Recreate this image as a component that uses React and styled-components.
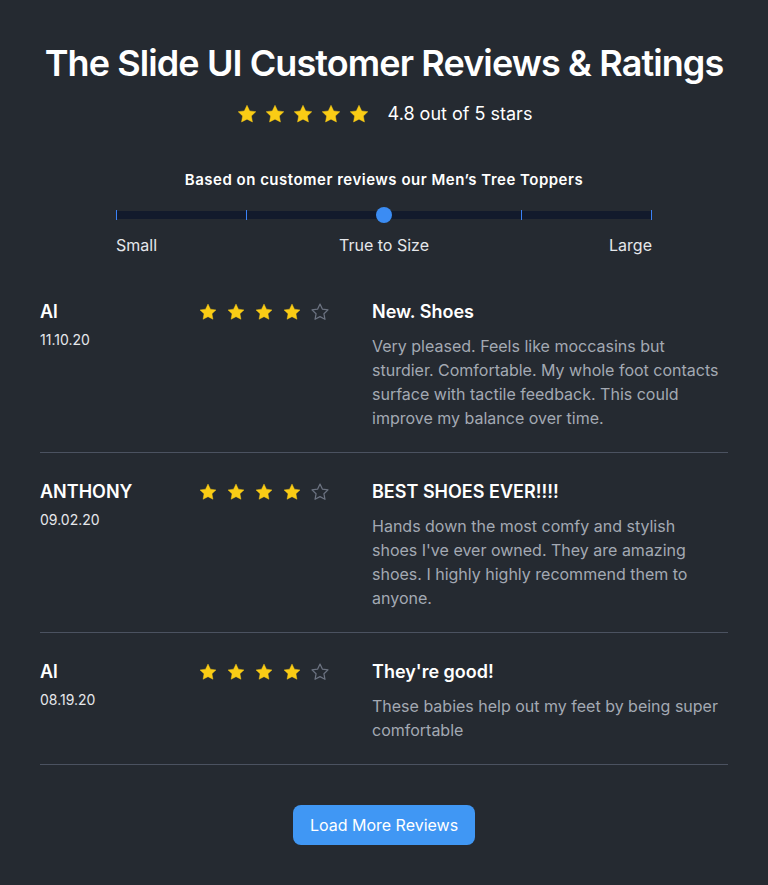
import React from "react";
import styled, { createGlobalStyle } from "styled-components";

const GlobalStyle = createGlobalStyle`
  * { box-sizing: border-box; }
  body {
    margin: 0;
    background: #252a31;
    font-family: Inter, "Noto Sans", sans-serif;
    color: #ffffff;
  }
`;

const Page = styled.div`
  padding: 43px 40px 40px;
  display: flex;
  flex-direction: column;
  align-items: center;
`;

const Title = styled.h1`
  margin: 0;
  font-size: 36px;
  line-height: 40px;
  font-weight: 600;
  letter-spacing: -0.9px;
  white-space: nowrap;
  text-align: center;
`;

const Summary = styled.div`
  margin-top: 17px;
  display: flex;
  align-items: center;
  gap: 18px;
  font-size: 18px;
  line-height: 28px;
`;

const StarRow = styled.div`
  display: flex;
  gap: ${(p) => p.$gap}px;
`;

const FitSection = styled.div`
  margin-top: 42px;
  width: 536px;
  display: flex;
  flex-direction: column;
  align-items: center;
`;

const FitTitle = styled.div`
  font-size: 15px;
  line-height: 20px;
  font-weight: 600;
  letter-spacing: 0.5px;
`;

const Track = styled.div`
  position: relative;
  margin-top: 21px;
  width: 100%;
  height: 8px;
  background: #121a2c;
`;

const Tick = styled.span`
  position: absolute;
  top: -1px;
  width: 1px;
  height: 10px;
  background: #3b82f6;
`;

const Thumb = styled.span`
  position: absolute;
  left: 50%;
  top: 50%;
  width: 16px;
  height: 16px;
  border-radius: 50%;
  background: #3b8cf3;
  transform: translate(-50%, -50%);
`;

const Labels = styled.div`
  margin-top: 14px;
  width: 100%;
  display: grid;
  grid-template-columns: 1fr auto 1fr;
  font-size: 16px;
  line-height: 24px;
  color: #e5e7eb;

  span:last-child {
    text-align: right;
  }
`;

const List = styled.div`
  margin-top: 16px;
  align-self: stretch;
`;

const Review = styled.div`
  display: grid;
  grid-template-columns: 158px 174px 352px;
  padding: 25px 0 22px;
  border-bottom: 1px solid #4b5260;
`;

const Name = styled.div`
  font-size: 18px;
  line-height: 28px;
  font-weight: 600;
`;

const Date = styled.div`
  margin-top: 4px;
  font-size: 14px;
  line-height: 20px;
  color: #e5e7eb;
`;

const StarsCell = styled.div`
  padding-top: 4px;
`;

const ReviewTitle = styled.div`
  font-size: 18px;
  line-height: 28px;
  font-weight: 600;
`;

const Body = styled.p`
  margin: 8px 0 0;
  font-size: 16px;
  line-height: 24px;
  color: #a3a9b3;
`;

const Button = styled.button`
  margin-top: 40px;
  width: 182px;
  height: 40px;
  border: none;
  border-radius: 8px;
  background: #4097f4;
  color: #ffffff;
  font-family: inherit;
  font-size: 16px;
  cursor: pointer;
`;

function Star({ filled, size }) {
  return (
    <svg width={size} height={size} viewBox="0 0 24 24">
      <path
        d="M12 2.5l2.94 6.1 6.66.9-4.85 4.63 1.2 6.62L12 17.6l-5.95 3.15 1.2-6.62L2.4 9.5l6.66-.9z"
        fill={filled ? "#facc15" : "none"}
        stroke={filled ? "#facc15" : "#6b7280"}
        strokeWidth={filled ? 0.5 : 1.5}
        strokeLinejoin="round"
      />
    </svg>
  );
}

function Stars({ count, size, gap }) {
  return (
    <StarRow $gap={gap}>
      {[0, 1, 2, 3, 4].map((i) => (
        <Star key={i} filled={i < count} size={size} />
      ))}
    </StarRow>
  );
}

const reviews = [
  {
    name: "Al",
    date: "11.10.20",
    title: "New. Shoes",
    body: "Very pleased. Feels like moccasins but sturdier. Comfortable. My whole foot contacts surface with tactile feedback. This could improve my balance over time.",
  },
  {
    name: "ANTHONY",
    date: "09.02.20",
    title: "BEST SHOES EVER!!!!",
    body: "Hands down the most comfy and stylish shoes I've ever owned. They are amazing shoes. I highly highly recommend them to anyone.",
  },
  {
    name: "Al",
    date: "08.19.20",
    title: "They're good!",
    body: "These babies help out my feet by being super comfortable",
  },
];

export default function App() {
  return (
    <>
      <GlobalStyle />
      <Page>
        <Title>The Slide UI Customer Reviews &amp; Ratings</Title>
        <Summary>
          <Stars count={5} size={22} gap={6} />
          <span>4.8 out of 5 stars</span>
        </Summary>

        <FitSection>
          <FitTitle>Based on customer reviews our Men’s Tree Toppers</FitTitle>
          <Track>
            {[0, 24.3, 75.5, 100].map((p) => (
              <Tick key={p} style={{ left: `calc(${p}% - ${p === 100 ? 1 : 0}px)` }} />
            ))}
            <Thumb />
          </Track>
          <Labels>
            <span>Small</span>
            <span>True to Size</span>
            <span>Large</span>
          </Labels>
        </FitSection>

        <List>
          {reviews.map((r, i) => (
            <Review key={i}>
              <div>
                <Name>{r.name}</Name>
                <Date>{r.date}</Date>
              </div>
              <StarsCell>
                <Stars count={4} size={20} gap={8} />
              </StarsCell>
              <div>
                <ReviewTitle>{r.title}</ReviewTitle>
                <Body>{r.body}</Body>
              </div>
            </Review>
          ))}
        </List>

        <Button>Load More Reviews</Button>
      </Page>
    </>
  );
}
